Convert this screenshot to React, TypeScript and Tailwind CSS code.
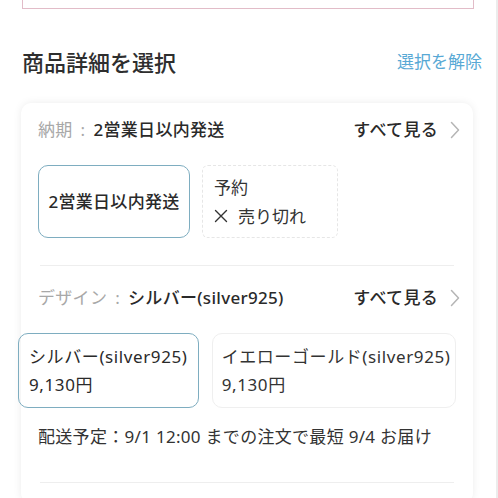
import React from 'react';

const font = {
  fontFamily: '"Noto Sans", "Noto Sans CJK JP", sans-serif',
};

const Chevron: React.FC = () => (
  <svg width="10" height="18" viewBox="0 0 10 18" fill="none" className="ml-[12px]">
    <path d="M1.5 1.5l7 7.5-7 7.5" stroke="#b5b5b5" strokeWidth="1.5" strokeLinecap="round" strokeLinejoin="round" />
  </svg>
);

// thin cross used for the sold-out mark
const Cross: React.FC = () => (
  <svg width="14" height="14" viewBox="0 0 14 14" fill="none" className="mr-[10px]">
    <path d="M1.5 1.5l11 11M12.5 1.5l-11 11" stroke="#333" strokeWidth="1.4" strokeLinecap="round" />
  </svg>
);

interface RowProps {
  label: string;
  value: string;
}

// section title line: label, current value, "see all" link
const SpecRow: React.FC<RowProps> = ({ label, value }) => (
  <div className="flex items-center justify-between h-[26px]">
    <div className="flex items-center text-[17px] tracking-[0.3px]">
      <span className="text-[#a8a8a8]">{label}</span>
      <span className="text-[#a8a8a8] mx-[8px]">:</span>
      <span className="font-medium text-[#2a2a2a]">{value}</span>
    </div>
    <div className="flex items-center -mr-[4px]">
      <span className="text-[17px] font-medium text-[#2a2a2a] tracking-[0.3px]">すべて見る</span>
      <Chevron />
    </div>
  </div>
);

const App: React.FC = () => {
  return (
    <div className="h-[498px] w-[498px] overflow-hidden bg-white border-r-2 border-[#ececec]" style={font}>
      {/* bottom of the box above */}
      <div className="mx-[22px] h-[9px] border border-t-0 border-[#e2bcc8]" />

      <div className="mt-[38px] flex items-center justify-between pl-[22px] pr-[14px]">
        <h2 className="text-[22px] leading-[30px] font-medium text-[#2e2e2e]">商品詳細を選択</h2>
        <span className="text-[17px] text-[#58a9d5]">選択を解除</span>
      </div>

      <div className="mx-[21px] mt-[26px] w-[452px] rounded-[10px] bg-white px-[17px] pt-[14px] pb-[20px] shadow-[0_0_8px_rgba(0,0,0,0.08)]">
        <SpecRow label="納期" value="2営業日以内発送" />

        <div className="mt-[22px] flex gap-[12px]">
          <div className="flex h-[73px] w-[152px] items-center justify-center rounded-[10px] border-[1.5px] border-[#7eadc0] text-[17px] font-medium text-[#2a2a2a] tracking-[0.3px]">
            2営業日以内発送
          </div>
          <div className="flex h-[73px] w-[136px] flex-col justify-center rounded-[6px] border border-dashed border-[#e6e6e6] pl-[11px] text-[17px] leading-[29px] text-[#333]">
            <span>予約</span>
            <span className="flex items-center">
              <Cross />
              売り切れ
            </span>
          </div>
        </div>

        <div className="mt-[27px] mx-[2px] h-px bg-[#eeeeee]" />

        <div className="mt-[19px]">
          <SpecRow label="デザイン" value="シルバー(silver925)" />
        </div>

        <div className="mt-[22px] -ml-[20px] flex gap-[13px]">
          <div className="flex h-[75px] w-[182px] flex-col justify-center rounded-[10px] border-[1.5px] border-[#7eadc0] pl-[10px] text-[17px] leading-[28px] tracking-[0.6px] text-[#2a2a2a]">
            <span>シルバー(silver925)</span>
            <span>9,130円</span>
          </div>
          <div className="flex h-[75px] w-[246px] flex-col justify-center rounded-[10px] border border-[#efefef] pl-[9px] text-[17px] leading-[28px] tracking-[0.6px] text-[#333]">
            <span>イエローゴールド(silver925)</span>
            <span>9,130円</span>
          </div>
        </div>

        <p className="mt-[17px] text-[17px] leading-[24px] tracking-[0.3px] text-[#333]">
          配送予定：9/1 12:00 までの注文で最短 9/4 お届け
        </p>

        <div className="mt-[33px] mx-[2px] h-px bg-[#eeeeee]" />
      </div>
    </div>
  );
};

export default App;
